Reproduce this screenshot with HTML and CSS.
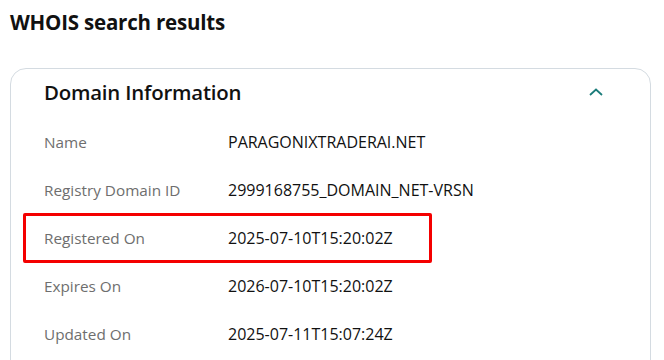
FILE: index.html
```html
<!DOCTYPE html>
<html>
<head>
    <title>WHOIS search results</title>
    <link rel="stylesheet" href="styles.css">
</head>
<body>
    <h1 class="page-title">WHOIS search results</h1>

    <div class="card">
        <div class="card-header">
            <h2>Domain Information</h2>
            <svg class="chevron" width="16" height="10" viewBox="0 0 16 10">
                <path d="M2 8 L8 2.5 L14 8" fill="none" stroke="#1b7c7a" stroke-width="1.8"/>
            </svg>
        </div>

        <div class="row">
            <span class="label">Name</span>
            <span class="value">PARAGONIXTRADERAI.NET</span>
        </div>
        <div class="row">
            <span class="label">Registry Domain ID</span>
            <span class="value">2999168755_DOMAIN_NET-VRSN</span>
        </div>
        <div class="row highlighted">
            <span class="label">Registered On</span>
            <span class="value">2025-07-10T15:20:02Z</span>
            <div class="mark"></div>
        </div>
        <div class="row">
            <span class="label">Expires On</span>
            <span class="value">2026-07-10T15:20:02Z</span>
        </div>
        <div class="row">
            <span class="label">Updated On</span>
            <span class="value">2025-07-11T15:07:24Z</span>
        </div>
    </div>
</body>
</html>
```

FILE: styles.css
```css
body {
    font-family: "Open Sans", Arial, sans-serif;
    margin: 0;
    padding: 0 13px 0 10px;
    background-color: #fff;
    color: #111;
    overflow: hidden;
    height: 360px;
}

.page-title {
    font-size: 20.5px;
    font-weight: 700;
    margin: 0;
    padding-top: 8px;
    height: 60px;
    line-height: 28px;
    letter-spacing: -0.2px;
}

.card {
    border: 1px solid #d4dbe1;
    border-radius: 16px;
    padding: 0 0 0 33px;
    height: 400px;
}

.card-header {
    display: flex;
    align-items: center;
    justify-content: space-between;
    height: 46px;
    margin-bottom: 3px;
    padding-right: 46px;
}

.card-header h2 {
    font-size: 20.4px;
    font-weight: 600;
    margin: 0;
    letter-spacing: -0.2px;
}

.chevron {
    display: block;
}

.row {
    position: relative;
    display: flex;
    align-items: center;
    height: 48px;
}

.label {
    width: 184px;
    font-size: 15.3px;
    color: #6e6e6e;
}

.value {
    font-size: 16px;
    color: #111;
}

.mark {
    position: absolute;
    left: -21px;
    top: -1px;
    width: 403px;
    height: 44px;
    border: 3px solid #f40000;
    border-radius: 2px;
}
```
